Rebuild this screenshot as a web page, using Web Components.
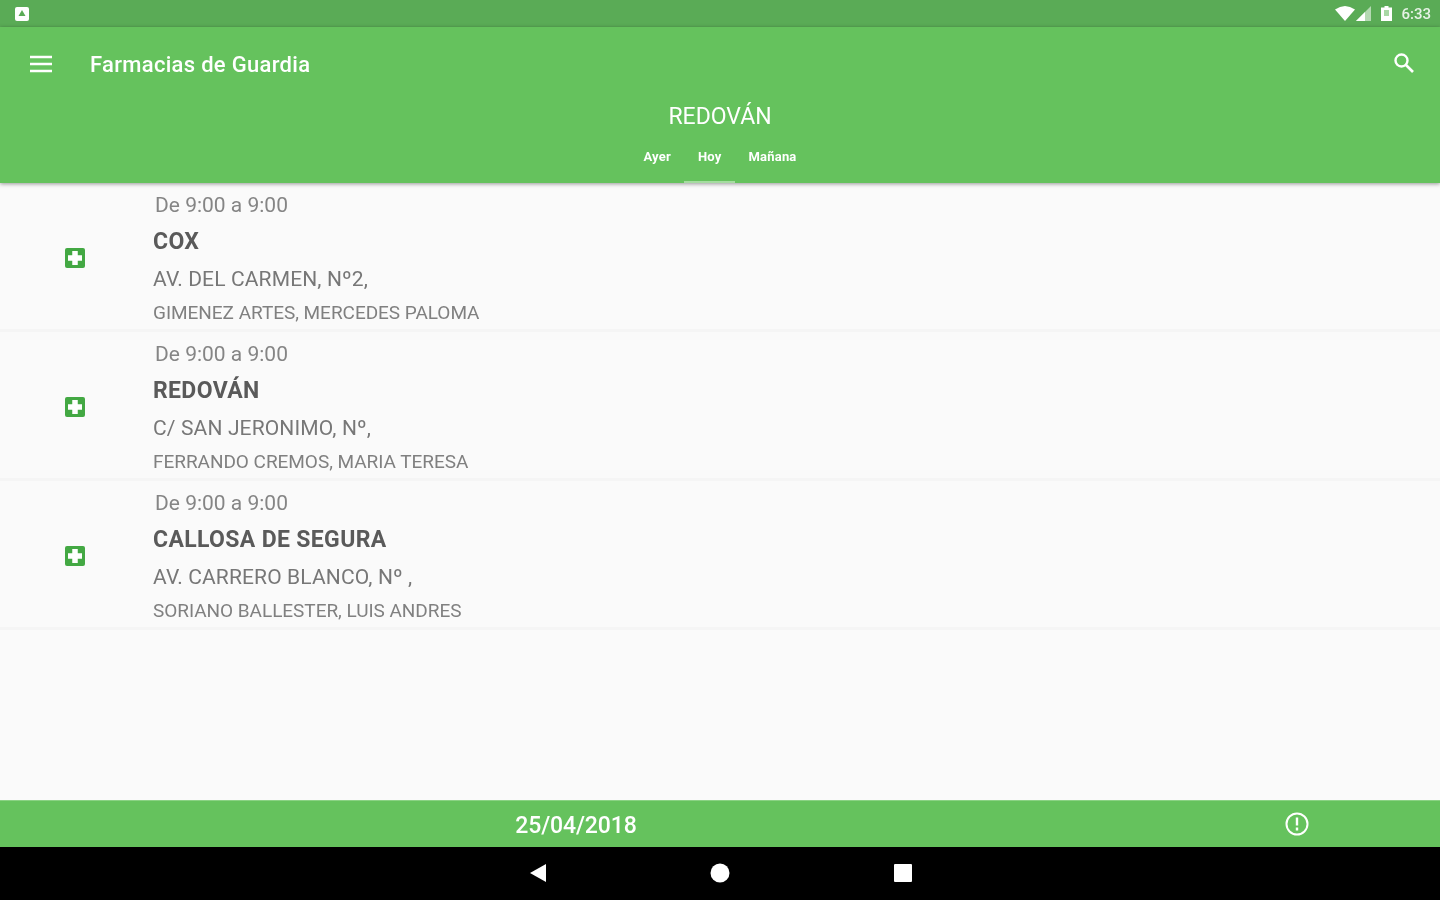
<!DOCTYPE html>
<html>
<head>
<meta charset="utf-8">
<title>Farmacias de Guardia</title>
<style>
  html, body { margin: 0; height: 100%; }
  body { font-family: Roboto, "Liberation Sans", sans-serif; background: #fafafa; }
  app-shell { height: 900px; }
</style>
</head>
<body>
<app-shell>
  <status-bar slot="top"></status-bar>
  <app-toolbar slot="top" title="Farmacias de Guardia" town="REDOVÁN"></app-toolbar>
  <pharmacy-item hours="De 9:00 a 9:00" name="COX" address="AV. DEL CARMEN, Nº2," owner="GIMENEZ ARTES, MERCEDES PALOMA"></pharmacy-item>
  <pharmacy-item hours="De 9:00 a 9:00" name="REDOVÁN" address="C/ SAN JERONIMO, Nº," owner="FERRANDO CREMOS, MARIA TERESA"></pharmacy-item>
  <pharmacy-item hours="De 9:00 a 9:00" name="CALLOSA DE SEGURA" address="AV. CARRERO BLANCO, Nº ," owner="SORIANO BALLESTER, LUIS ANDRES"></pharmacy-item>
  <date-bar slot="bottom" date="25/04/2018"></date-bar>
  <nav-bar slot="bottom"></nav-bar>
</app-shell>

<script>
class AppShell extends HTMLElement {
  constructor() {
    super();
    this._root = this.attachShadow({mode: 'open'});
    this._root.innerHTML = `
    <style>
      :host { display: flex; flex-direction: column; }
      .list { flex: 1; padding-top: 3px; }
    </style>
    <slot name="top"></slot>
    <div class="list"><slot></slot></div>
    <slot name="bottom"></slot>
    `;
  }
}

class StatusBar extends HTMLElement {
  constructor() {
    super();
    this._root = this.attachShadow({mode: 'open'});
    this._root.innerHTML = `
    <style>
      :host {
        display: flex; align-items: center; height: 27px; padding: 0 9px 0 15px;
        background: #5aab56; color: #fff;
      }
      .spacer { flex: 1; }
      svg { display: block; filter: blur(.6px); }
      .time { font-size: 15px; font-weight: 500; margin-left: 9px; opacity: .85; filter: blur(.7px); }
    </style>
    <svg width="14" height="14" viewBox="0 0 14 14">
      <rect width="14" height="14" rx="2" fill="#fff"/>
      <path d="M7 3l3.500 6h-7z" fill="#5aab56"/>
    </svg>
    <div class="spacer"></div>
    <svg width="20" height="15" viewBox="0 0 20 15"><path d="M0 3.500Q10-3.500 20 3.500L10 15z" fill="#fff"/></svg>
    <svg width="15" height="15" viewBox="0 0 15 15" style="margin-left:1px"><path d="M15 0v15H0z" fill="#fff" opacity=".55"/><path d="M9 6v9H0z" fill="#fff"/></svg>
    <svg width="11" height="15" viewBox="0 0 11 15" style="margin-left:10px"><path d="M3.500 0h4v1.500H11V15H0V1.500h3.500z" fill="#fff"/><rect x="3" y="4" width="5" height="6" fill="#a9d8a5"/></svg>
    <span class="time">6:33</span>
    `;
  }
}

class AppToolbar extends HTMLElement {
  constructor() {
    super();
    this._root = this.attachShadow({mode: 'open'});
    this._root.innerHTML = `
    <style>
      :host {
        display: block; height: 156px; background: #65c25d; color: #fff;
        box-shadow: 0 1px 4px rgba(0,0,0,.4); position: relative;
      }
      .row { display: flex; align-items: center; height: 74px; padding: 0 25px 0 30px; }
      .title { font-size: 22px; font-weight: 500; margin-left: 38px; flex: 1; letter-spacing: .3px; padding-top: 1px; }
      svg { display: block; }
      .search { margin-top: -2px; }
      .town { text-align: center; font-size: 23px; line-height: 28px; margin-top: 2px; }
      .tabs { display: flex; justify-content: center; margin-top: 8px; }
      .tab { font-size: 13px; font-weight: 700; letter-spacing: .2px; height: 44px; line-height: 36px; box-sizing: border-box; padding: 0 13.500px; }
      .tab.on { border-bottom: 2px solid #a5dca0; }
      .row, .town, .tabs { filter: blur(.7px); }
    </style>
    <div class="row">
      <svg width="22" height="18" viewBox="0 0 22 18"><path d="M0 2h22M0 9h22M0 16h22" stroke="#fff" stroke-width="2.400"/></svg>
      <div class="title">${this.getAttribute('title')}</div>
      <svg class="search" width="22" height="22" viewBox="0 0 22 22"><circle cx="8.500" cy="8.500" r="6" fill="none" stroke="#fff" stroke-width="2.400"/><path d="M13 13l7 7" stroke="#fff" stroke-width="2.600"/></svg>
    </div>
    <div class="town">${this.getAttribute('town')}</div>
    <div class="tabs">
      <div class="tab">Ayer</div>
      <div class="tab on">Hoy</div>
      <div class="tab">Mañana</div>
    </div>
    `;
  }
}

class PharmacyItem extends HTMLElement {
  constructor() {
    super();
    this._root = this.attachShadow({mode: 'open'});
    this._root.innerHTML = `
    <style>
      :host {
        display: flex; height: 146px; margin-bottom: 3px; background: #fafafa;
        border-bottom: 3px solid #f5f5f5; box-sizing: border-box; color: #666;
      }
      .icon { width: 153px; display: flex; align-items: center; padding-left: 65px; box-sizing: border-box; flex: none; }
      svg { display: block; filter: blur(.4px); }
      .text { filter: blur(.7px); }
      .text div { white-space: nowrap; }
      .hours { font-size: 21px; line-height: 24px; margin: 7px 0 0 2px; color: #858585; }
      .name { font-size: 23px; font-weight: 700; line-height: 30px; margin-top: 10px; color: #5a5a5a; letter-spacing: .35px; }
      .address { font-size: 21px; line-height: 26px; margin-top: 9px; color: #777; letter-spacing: .14px; }
      .owner { font-size: 19px; line-height: 24px; margin-top: 9px; color: #808080; letter-spacing: -.04px; }
    </style>
    <div class="icon">
      <svg width="20" height="20" viewBox="0 0 20 20">
        <rect width="20" height="20" rx="2" fill="#43a843"/>
        <path d="M10 3v14M3 10h14" stroke="#fff" stroke-width="5.500"/>
      </svg>
    </div>
    <div class="text">
      <div class="hours">${this.getAttribute('hours')}</div>
      <div class="name">${this.getAttribute('name')}</div>
      <div class="address">${this.getAttribute('address')}</div>
      <div class="owner">${this.getAttribute('owner')}</div>
    </div>
    `;
  }
}

class DateBar extends HTMLElement {
  constructor() {
    super();
    this._root = this.attachShadow({mode: 'open'});
    this._root.innerHTML = `
    <style>
      :host {
        display: flex; align-items: center; height: 47px; background: #65c25d; color: #fff;
        box-sizing: border-box; border-top: 1px solid #8ad283;
      }
      .date { width: 1152px; text-align: center; font-size: 23px; font-weight: 500; filter: blur(.6px); letter-spacing: -.1px; padding-top: 3px; }
      .alert { margin-left: 133px; display: block; filter: blur(.5px); margin-top: -1px; }
    </style>
    <div class="date">${this.getAttribute('date')}</div>
    <svg class="alert" width="24" height="24" viewBox="0 0 24 24">
      <circle cx="12" cy="12" r="10.500" fill="none" stroke="#fff" stroke-width="2"/>
      <path d="M12 5.500v8M12 15.500v3" stroke="#fff" stroke-width="2.400"/>
    </svg>
    `;
  }
}

class NavBar extends HTMLElement {
  constructor() {
    super();
    this._root = this.attachShadow({mode: 'open'});
    this._root.innerHTML = `
    <style>
      :host {
        display: flex; align-items: center; justify-content: center; gap: 163px; height: 53px;
        background: #000; padding: 0 0 1px 2px; box-sizing: border-box;
      }
      svg { display: block; filter: blur(.5px); }
    </style>
    <svg width="18" height="20" viewBox="0 0 18 20"><path d="M1 10L17 1v18z" fill="#fff"/></svg>
    <svg width="20" height="20" viewBox="0 0 20 20"><circle cx="10" cy="10" r="9.500" fill="#fff"/></svg>
    <svg width="20" height="20" viewBox="0 0 20 20"><rect x="1" y="1" width="18" height="18" rx="1" fill="#fff"/></svg>
    `;
  }
}

window.customElements.define('app-shell', AppShell);
window.customElements.define('status-bar', StatusBar);
window.customElements.define('app-toolbar', AppToolbar);
window.customElements.define('pharmacy-item', PharmacyItem);
window.customElements.define('date-bar', DateBar);
window.customElements.define('nav-bar', NavBar);
</script>
</body>
</html>
